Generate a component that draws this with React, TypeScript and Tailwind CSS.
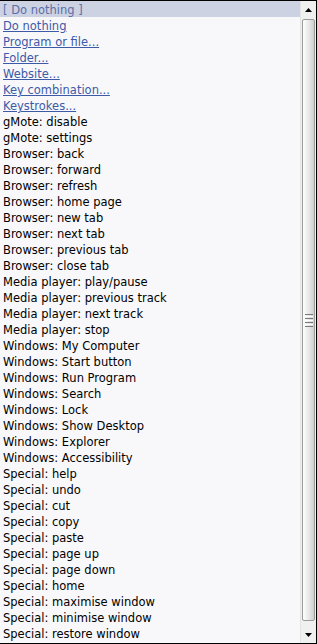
import React from "react";

const links = [
  "Do nothing",
  "Program or file...",
  "Folder...",
  "Website...",
  "Key combination...",
  "Keystrokes...",
];

const items = [
  "gMote: disable",
  "gMote: settings",
  "Browser: back",
  "Browser: forward",
  "Browser: refresh",
  "Browser: home page",
  "Browser: new tab",
  "Browser: next tab",
  "Browser: previous tab",
  "Browser: close tab",
  "Media player: play/pause",
  "Media player: previous track",
  "Media player: next track",
  "Media player: stop",
  "Windows: My Computer",
  "Windows: Start button",
  "Windows: Run Program",
  "Windows: Search",
  "Windows: Lock",
  "Windows: Show Desktop",
  "Windows: Explorer",
  "Windows: Accessibility",
  "Special: help",
  "Special: undo",
  "Special: cut",
  "Special: copy",
  "Special: paste",
  "Special: page up",
  "Special: page down",
  "Special: home",
  "Special: maximise window",
  "Special: minimise window",
  "Special: restore window",
];

export default function App() {
  return (
    <div
      className="w-[317px] h-[644px] flex border-t border-r border-b border-black bg-[#f8f8fa] overflow-hidden"
      style={{ fontFamily: '"DejaVu Sans", Verdana, sans-serif' }}
    >
      <div className="flex-1 flex flex-col text-[11.5px] leading-[16px] overflow-hidden">
        <div className="h-[16px] shrink-0 pt-[1px] bg-[#cdd2e2] text-[#5b6fa8] pl-[3px] whitespace-nowrap">
          [ Do nothing ]
        </div>
        {links.map((t) => (
          <div key={t} className="h-[16px] shrink-0 pt-[1px] pl-[3px] whitespace-nowrap">
            <span className="text-[#3d5aa8] underline">{t}</span>
          </div>
        ))}
        {items.map((t) => (
          <div key={t} className="h-[16px] shrink-0 pt-[1px] pl-[3px] whitespace-nowrap text-black">
            {t}
          </div>
        ))}
      </div>
      <div className="w-[16px] flex flex-col bg-[#f0f0f0] border-l border-[#e4e4e4]">
        <div className="h-[17px] flex items-center justify-center">
          <svg width="7" height="4" viewBox="0 0 7 4">
            <polygon points="3.5,0 7,4 0,4" fill="#000" />
          </svg>
        </div>
        <div className="mx-[1px] mt-[1px] h-[602px] rounded-[2px] border border-[#9a9a9a] bg-gradient-to-r from-[#ffffff] via-[#e9e9e9] to-[#cfcfcf] flex items-center justify-center">
          <div className="flex flex-col gap-[1px]">
            <div className="w-[8px] h-[1px] bg-[#7a7a7a]" />
            <div className="w-[8px] h-[1px] bg-[#ffffff]" />
            <div className="w-[8px] h-[1px] bg-[#7a7a7a]" />
            <div className="w-[8px] h-[1px] bg-[#ffffff]" />
            <div className="w-[8px] h-[1px] bg-[#7a7a7a]" />
            <div className="w-[8px] h-[1px] bg-[#ffffff]" />
            <div className="w-[8px] h-[1px] bg-[#7a7a7a]" />
          </div>
        </div>
        <div className="flex-1 flex items-center justify-center pt-[6px]">
          <svg width="7" height="4" viewBox="0 0 7 4">
            <polygon points="0,0 7,0 3.5,4" fill="#000" />
          </svg>
        </div>
      </div>
    </div>
  );
}
